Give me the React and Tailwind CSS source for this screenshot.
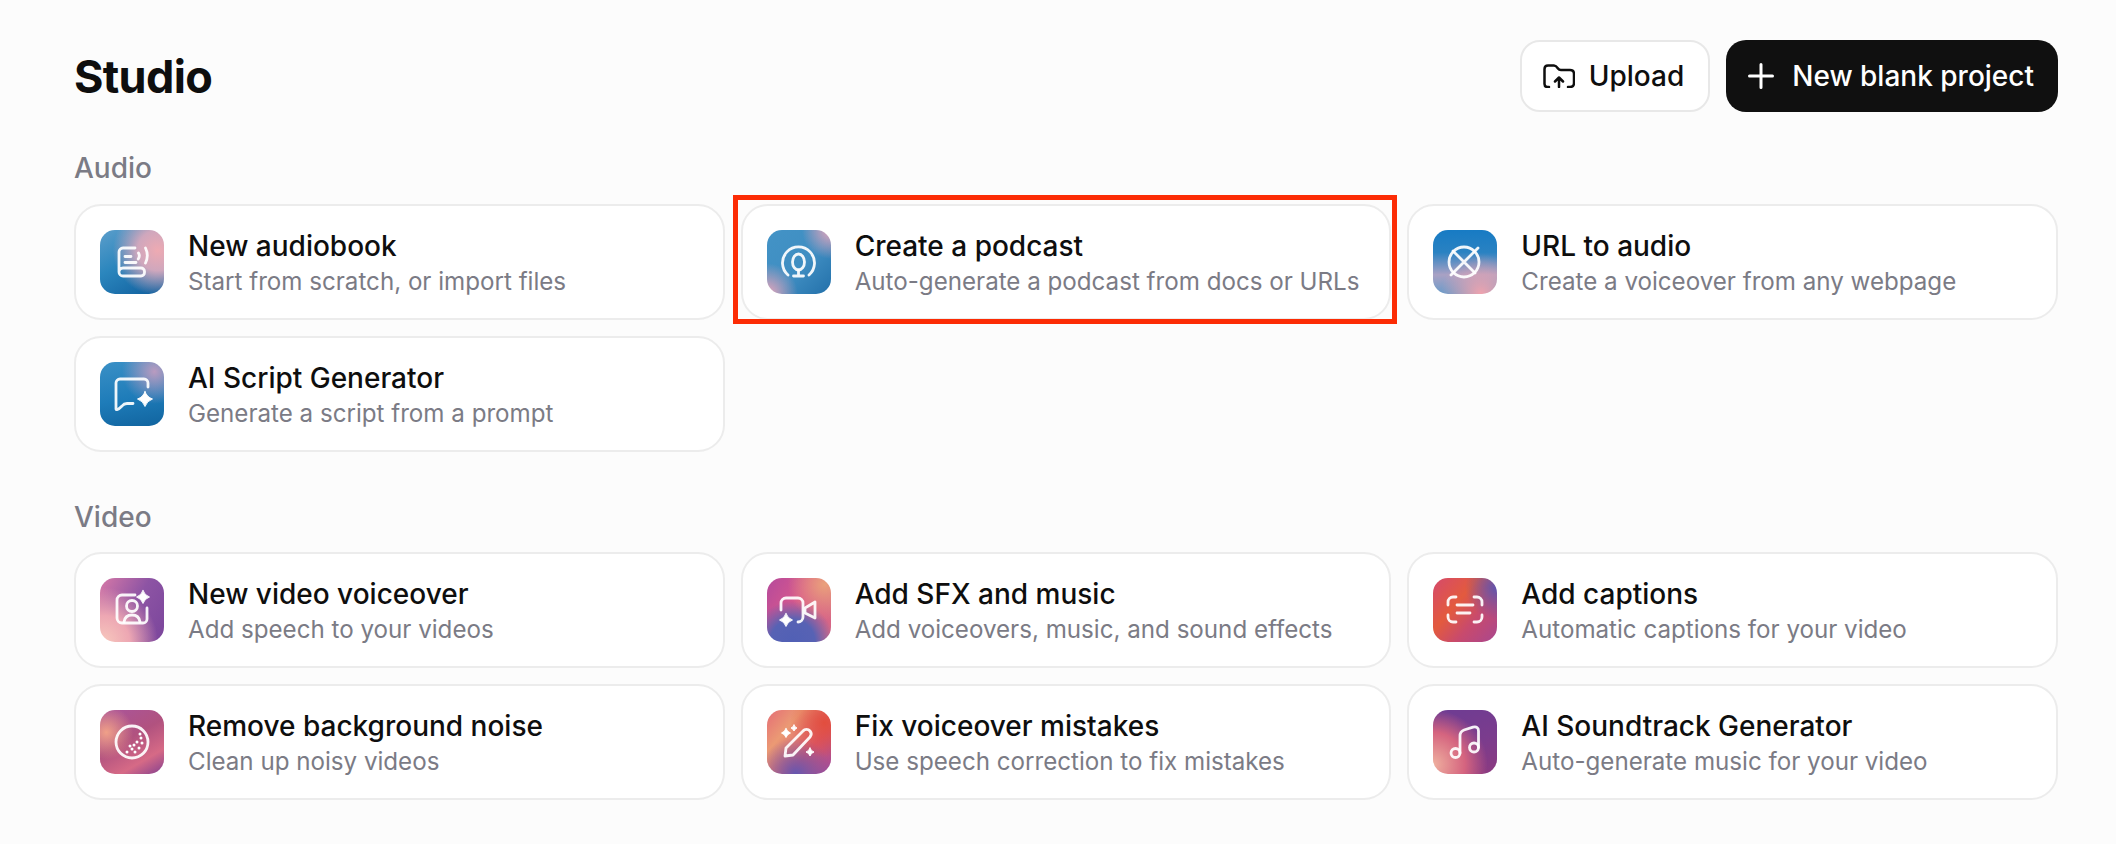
const sparkle = (cx, cy, r) =>
  `M${cx} ${cy - r}Q${cx + r * 0.25} ${cy - r * 0.25} ${cx + r} ${cy}Q${cx + r * 0.25} ${cy + r * 0.25} ${cx} ${cy + r}Q${cx - r * 0.25} ${cy + r * 0.25} ${cx - r} ${cy}Q${cx - r * 0.25} ${cy - r * 0.25} ${cx} ${cy - r}Z`;

function Tile({ bg, children }) {
  return (
    <div className={`h-16 w-16 shrink-0 overflow-hidden rounded-[15px] ${bg}`}>
      <svg viewBox="0 0 64 64" className="h-16 w-16" fill="none" stroke="#fff" strokeOpacity="0.92" strokeWidth="2.8" strokeLinecap="round" strokeLinejoin="round">
        {children}
      </svg>
    </div>
  );
}

const BookIcon = () => (
  <>
    <path d="M35 18H23a4 4 0 0 0-4 4v20a4 4 0 0 0 4 4h18a3.5 3.5 0 0 0 3.5-3.5v-1a3.5 3.5 0 0 0-3.5-3.5H23a4 4 0 0 0-4 4" />
    <path d="M25 26.500h6M25 32.500h11" />
    <path d="M38.500 23q1.800 3-.3 6M45.500 18q3.600 7.500 0 15" />
  </>
);
const PodcastIcon = () => (
  <>
    <path d="M21 45a16 16 0 1 1 21 0" />
    <ellipse cx="31.500" cy="32" rx="6" ry="8" />
    <path d="M31.500 40v6M26.500 46h10" />
  </>
);
const GlobeIcon = () => (
  <>
    <circle cx="31" cy="32" r="15" />
    <path d="M20 21l22 22M45 18L18 45" />
  </>
);
const ChatIcon = () => (
  <>
    <path d="M48 25v-4a4 4 0 0 0-4-4H20a4 4 0 0 0-4 4v26q0 1 1.500 .5Q19 47 22 44q2-2.500 5-2.500h6" />
    <path d={sparkle(45, 37, 7.5)} fill="#fff" stroke="#fff" strokeWidth="1" />
  </>
);
const PersonIcon = () => (
  <>
    <path d="M35 17H22a5 5 0 0 0-5 5v18a5 5 0 0 0 5 5h21a4 4 0 0 0 4-4V30" />
    <circle cx="32" cy="28" r="5.500" />
    <path d="M24 44q1-7 8-7t8 7" />
    <path d={sparkle(43, 19, 6.5)} fill="#fff" stroke="#fff" strokeWidth="1" />
  </>
);
const CameraIcon = () => (
  <>
    <path d="M14 32V25a5 5 0 0 1 5-5h12a5 5 0 0 1 5 5v14a5 5 0 0 1-5 5" />
    <path d="M38 30l10-6v16l-10-5z" />
    <path d={sparkle(19, 42, 6.5)} fill="#fff" stroke="#fff" strokeWidth="1" />
  </>
);
const CaptionsIcon = () => (
  <>
    <path d="M15 27v-3a5 5 0 0 1 5-5h3M41 19h3a5 5 0 0 1 5 5v3M49 37v2a5 5 0 0 1-5 5h-3M23 44h-3a5 5 0 0 1-5-5v-2" />
    <path d="M24 27h16M24 35h13" />
  </>
);
const NoiseIcon = () => (
  <>
    <circle cx="32" cy="32" r="16" />
    <g fill="#fff" stroke="none">
      {[[27, 42], [32, 39], [34, 35], [37, 32], [41, 28], [35, 42], [39, 38], [42, 33], [30, 36], [40, 24]].map(([x, y]) => (
        <circle key={`${x}-${y}`} cx={x} cy={y} r="1.500" />
      ))}
    </g>
  </>
);
const PenIcon = () => (
  <>
    <path d="M18 46l1-8 17-17a4.500 4.500 0 0 1 7 0q2.500 3 0 6L26 45z" />
    <path d={sparkle(19, 23, 4.5)} fill="#fff" stroke="#fff" strokeWidth="1" />
    <path d={sparkle(27, 18, 3)} fill="#fff" stroke="#fff" strokeWidth="1" />
    <path d={sparkle(43, 42, 4)} fill="#fff" stroke="#fff" strokeWidth="1" />
  </>
);
const MusicIcon = () => (
  <>
    <circle cx="22.500" cy="43" r="4.500" />
    <circle cx="41" cy="37.500" r="4.500" />
    <path d="M27 43V26q0-4.500 4-6l9-2.800q5.500-1.200 5.500 3.800v16.500" />
  </>
);

const audio = [
  { title: "New audiobook", sub: "Start from scratch, or import files", Icon: BookIcon, bg: "bg-[radial-gradient(circle_at_90%_32%,#eeaab2_0%,#cfa7bd_28%,transparent_62%),linear-gradient(150deg,#5c9ecb_0%,#2b86bd_45%,#0f5d9c_100%)]" },
  { title: "Create a podcast", sub: "Auto-generate a podcast from docs or URLs", Icon: PodcastIcon, selected: true, bg: "bg-[radial-gradient(circle_at_100%_0%,#e8a5bb_0%,transparent_32%),radial-gradient(circle_at_0%_100%,#eda6ba_0%,transparent_34%),linear-gradient(135deg,#4393c6_0%,#3f8ec2_55%,#2370aa_100%)]" },
  { title: "URL to audio", sub: "Create a voiceover from any webpage", Icon: GlobeIcon, bg: "bg-[radial-gradient(circle_at_75%_100%,#f0a3ae_0%,transparent_50%),linear-gradient(180deg,#177bc4_0%,#2a82c2_35%,#a9a1c4_70%,#6a9bc9_100%)]" },
  { title: "AI Script Generator", sub: "Generate a script from a prompt", Icon: ChatIcon, bg: "bg-[radial-gradient(circle_at_85%_15%,#b99bc0_0%,transparent_42%),linear-gradient(170deg,#3a90c6_0%,#1e7cb9_55%,#11649f_100%)]" },
];

const video = [
  { title: "New video voiceover", sub: "Add speech to your videos", Icon: PersonIcon, bg: "bg-[radial-gradient(circle_at_5%_100%,#f7c8bd_0%,#eda7b3_30%,transparent_62%),linear-gradient(120deg,#d779a7_0%,#8d54a4_50%,#7a459b_100%)]" },
  { title: "Add SFX and music", sub: "Add voiceovers, music, and sound effects", Icon: CameraIcon, bg: "bg-[radial-gradient(circle_at_90%_10%,#eaa17b_0%,transparent_45%),radial-gradient(circle_at_40%_100%,#5160b5_0%,#5762b4_30%,transparent_55%),linear-gradient(120deg,#b54a9c_0%,#d8588c_45%,#d66a84_100%)]" },
  { title: "Add captions", sub: "Automatic captions for your video", Icon: CaptionsIcon, bg: "bg-[radial-gradient(circle_at_100%_15%,#5e55ae_0%,transparent_38%),linear-gradient(130deg,#d54a6c_0%,#e35a3e_38%,#c84a6d_65%,#a9478f_100%)]" },
  { title: "Remove background noise", sub: "Clean up noisy videos", Icon: NoiseIcon, bg: "bg-[radial-gradient(circle_at_10%_35%,#f0a088_0%,transparent_38%),linear-gradient(150deg,#a9559d_0%,#b1527f_45%,#d66a86_75%,#85408f_100%)]" },
  { title: "Fix voiceover mistakes", sub: "Use speech correction to fix mistakes", Icon: PenIcon, bg: "bg-[radial-gradient(circle_at_90%_20%,#e24e3e_0%,transparent_45%),radial-gradient(circle_at_45%_100%,#6557b0_0%,transparent_50%),linear-gradient(130deg,#e56e76_0%,#eb9a74_30%,#d8556c_65%,#a04b9c_100%)]" },
  { title: "AI Soundtrack Generator", sub: "Auto-generate music for your video", Icon: MusicIcon, bg: "bg-[radial-gradient(circle_at_0%_85%,#efb09f_0%,#d5647f_38%,transparent_65%),linear-gradient(160deg,#6d3c93_0%,#7b3c8d_55%,#8c3a80_100%)]" },
];

function Card({ title, sub, Icon, bg, selected }) {
  return (
    <div className="relative flex h-[116px] items-center gap-[24px] rounded-[27px] border-2 border-[#ececec] bg-white pl-[24px]">
      <Tile bg={bg}>
        <Icon />
      </Tile>
      <div className="min-w-0 pt-[2px]">
        <div className="text-[28px] leading-[35px] font-medium text-[#0e0e0e]">{title}</div>
        <div className="mt-[2px] text-[24.15px] leading-[32px] text-[#7b7b85]">{sub}</div>
      </div>
      {/* red annotation frame */}
      {selected && <div className="absolute -top-[11px] -right-[8px] -bottom-[6px] -left-[10px] border-[5px] border-[#fc2c05]" />}
    </div>
  );
}

export default function App() {
  return (
    <div className="min-h-[844px] bg-[#fcfcfc] pt-10 pr-[58px] pl-[74px] font-['Inter',sans-serif]">
      <div className="flex items-start justify-between">
        <h1 className="text-[45px] leading-[74px] font-bold tracking-[-0.015em] text-[#0e0e0e]">Studio</h1>
        <div className="flex gap-4">
          <button className="flex h-[72px] items-center gap-[14px] rounded-[20px] border-2 border-[#e8e8e8] bg-white pr-[24px] pl-[21px] text-[28px] font-medium text-[#0e0e0e]">
            <svg viewBox="0 0 32 24" className="h-6 w-8" fill="none" stroke="#0e0e0e" strokeWidth="2.500" strokeLinecap="round" strokeLinejoin="round">
              <path d="M6 23H4.500Q1.500 23 1.500 20V5Q1.500 1.500 5 1.500H11Q13 1.500 15 4.500Q16 6 18 6H27Q31 6 31 10V19Q31 23 27 23H25" />
              <path d="M16 23V14M12 17.500l4-4 4 4" />
            </svg>
            Upload
          </button>
          <button className="flex h-[72px] items-center gap-[18px] rounded-[20px] bg-[#101010] pr-6 pl-[22px] text-[28px] font-medium text-white">
            <svg viewBox="0 0 26 26" className="h-[26px] w-[26px]" fill="none" stroke="#fff" strokeWidth="3" strokeLinecap="round">
              <path d="M13 1.500v23M1.500 13h23" />
            </svg>
            New blank project
          </button>
        </div>
      </div>

      <div className="mt-[34px] mb-[16px] text-[28px] leading-[40px] font-medium text-[#7b7b85]">Audio</div>
      <div className="grid grid-cols-3 gap-4">
        {audio.map((c) => (
          <Card key={c.title} {...c} />
        ))}
      </div>

      <div className="mt-[45px] mb-[15px] text-[28px] leading-[40px] font-medium text-[#7b7b85]">Video</div>
      <div className="grid grid-cols-3 gap-4">
        {video.map((c) => (
          <Card key={c.title} {...c} />
        ))}
      </div>
    </div>
  );
}
